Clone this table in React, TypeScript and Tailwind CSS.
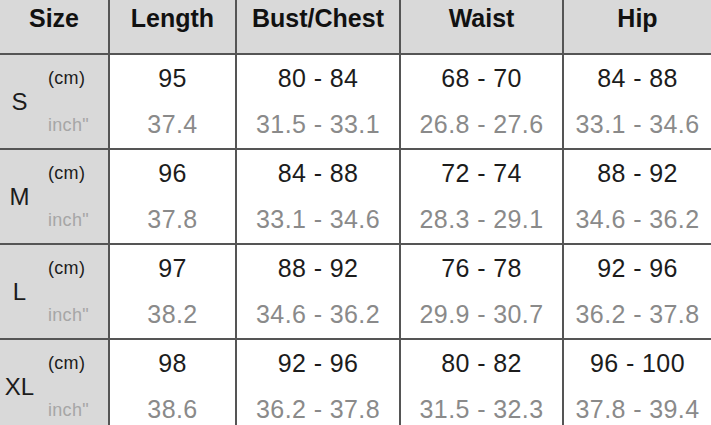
import React from 'react';

// Size chart: each size has a cm row and an inch row
type SizeRow = {
  size: string;
  cm: string[];
  inch: string[];
};

const HEADERS = ['Size', 'Length', 'Bust/Chest', 'Waist', 'Hip'];

const ROWS: SizeRow[] = [
  { size: 'S', cm: ['95', '80 - 84', '68 - 70', '84 - 88'], inch: ['37.4', '31.5 - 33.1', '26.8 - 27.6', '33.1 - 34.6'] },
  { size: 'M', cm: ['96', '84 - 88', '72 - 74', '88 - 92'], inch: ['37.8', '33.1 - 34.6', '28.3 - 29.1', '34.6 - 36.2'] },
  { size: 'L', cm: ['97', '88 - 92', '76 - 78', '92 - 96'], inch: ['38.2', '34.6 - 36.2', '29.9 - 30.7', '36.2 - 37.8'] },
  { size: 'XL', cm: ['98', '92 - 96', '80 - 82', '96 - 100'], inch: ['38.6', '36.2 - 37.8', '31.5 - 32.3', '37.8 - 39.4'] },
];

function SizeCell({ size }: { size: string }) {
  return (
    <div className="flex h-[95px] border-r-2 border-b-2 border-[#555] bg-[#d9d9d9]">
      <div className="flex w-[39px] items-center justify-center text-[24px] text-[#1c1c1c]">{size}</div>
      <div className="ml-[9px] flex flex-col">
        <div className="flex h-[47px] items-center text-[18px] tracking-[0.3px] text-[#1c1c1c]">(cm)</div>
        <div className="flex h-[46px] items-center text-[18px] tracking-[0.3px] text-[#a6a6a6]">inch"</div>
      </div>
    </div>
  );
}

function ValueCell({ cm, inch }: { cm: string; inch: string }) {
  return (
    <div className="flex h-[95px] flex-col border-r-2 border-b-2 border-[#555] bg-white">
      <div className="flex h-[47px] items-center justify-center text-[25px] tracking-[0.4px] text-[#1c1c1c]">{cm}</div>
      <div className="flex h-[46px] items-center justify-center text-[25px] tracking-[0.4px] text-[#8a8a8a]">{inch}</div>
    </div>
  );
}

export default function App() {
  return (
    <div
      className="h-[425px] w-[711px] overflow-hidden bg-white"
      style={{ fontFamily: '"Liberation Sans", Arial, sans-serif' }}
    >
      <div className="grid grid-cols-[110px_127px_164px_163px_149px]">
        {HEADERS.map((h) => (
          <div
            key={h}
            className="flex h-[55px] justify-center border-r-2 border-b-2 border-[#555] bg-[#d9d9d9] pt-[4px] text-[25px] font-bold leading-[29px] text-[#111]"
          >
            {h}
          </div>
        ))}
        {ROWS.map((row) => (
          <React.Fragment key={row.size}>
            <SizeCell size={row.size} />
            {row.cm.map((v, i) => (
              <ValueCell key={i} cm={v} inch={row.inch[i]} />
            ))}
          </React.Fragment>
        ))}
      </div>
    </div>
  );
}
